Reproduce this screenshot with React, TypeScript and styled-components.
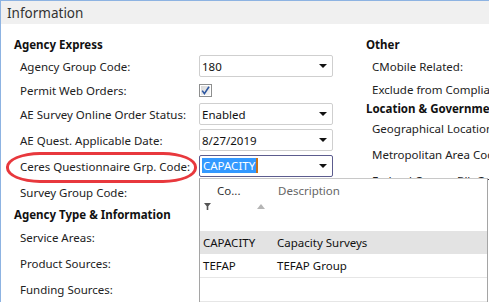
import React from "react";
import styled, { createGlobalStyle } from "styled-components";

const Global = createGlobalStyle`
  html, body { margin: 0; padding: 0; background: #fff; }
  body { font-family: "Noto Sans", "Open Sans", sans-serif; }
  * { box-sizing: border-box; }
`;

const Frame = styled.div`
  position: relative;
  width: 489px;
  height: 302px;
  overflow: hidden;
  background: #fff;
  border-left: 1px solid #8db3e2;
  border-top: 1px solid #8db3e2;
  font-size: 11.5px;
  color: #222;
`;

const Header = styled.div`
  height: 23px;
  background: #f0f0f0;
  display: flex;
  align-items: center;
  padding-left: 6px;
  font-size: 13.5px;
  color: #333;
`;

const Body = styled.div`
  display: flex;
  padding-top: 10px;
`;

const Column = styled.div<{ $left: number; $width: number }>`
  display: flex;
  flex-direction: column;
  margin-left: ${(p) => p.$left}px;
  width: ${(p) => p.$width}px;
  flex: none;
`;

const Heading = styled.div<{ $h?: number }>`
  height: ${(p) => p.$h ?? 20}px;
  margin-bottom: 1px;
  display: flex;
  align-items: center;
  font-weight: 700;
  color: #111;
  white-space: nowrap;
`;

const Row = styled.div<{ $h?: number; $mb?: number }>`
  display: flex;
  align-items: center;
  height: ${(p) => p.$h ?? 22}px;
  margin-bottom: ${(p) => p.$mb ?? 4}px;
  white-space: nowrap;
`;

const Label = styled.div`
  width: 185px;
  padding-left: 6px;
  flex: none;
  color: #222;
  overflow: hidden;
`;

const Select = styled.div<{ $focus?: boolean }>`
  width: 134px;
  height: 22px;
  flex: none;
  display: flex;
  align-items: center;
  justify-content: space-between;
  padding: 0 4px 0 2px;
  border: 1px solid ${(p) => (p.$focus ? "#5c5c8e" : "#cfcfcf")};
  border-radius: 2px;
  background: #fff;
  color: #111;
`;

const Arrow = styled.span`
  width: 0;
  height: 0;
  border-left: 4px solid transparent;
  border-right: 4px solid transparent;
  border-top: 4px solid #111;
  margin-right: 1px;
`;

const Selected = styled.span`
  background: #3399ff;
  color: #fff;
  padding: 0 1px;
  line-height: 16px;
  border-right: 2px solid #c8711a;
`;

const Lookup = styled.div`
  position: absolute;
  left: 198px;
  top: 177px;
  width: 289px;
  height: 140px;
  background: #fff;
  border: 1px solid #a5a5a5;
  border-top-color: #c8c8c8;
  padding: 0 0 0 3px;
`;

const LookupHead = styled.div`
  height: 52px;
  display: flex;
  flex-direction: column;
`;

const HeadLabels = styled.div`
  display: grid;
  grid-template-columns: 74px 1fr;
  height: 21px;
  align-items: center;
  padding-top: 1px;
`;

const HeadCell = styled.div<{ $pad: number; $muted?: boolean }>`
  padding-left: ${(p) => p.$pad}px;
  color: ${(p) => (p.$muted ? "#666" : "#333")};
`;

const IconBar = styled.div`
  display: flex;
  align-items: center;
  gap: 46px;
  height: 12px;
  padding-left: 1px;
`;

const LookupRow = styled.div<{ $sel?: boolean }>`
  display: grid;
  grid-template-columns: 74px 1fr;
  align-items: center;
  height: ${(p) => (p.$sel ? 23 : 24)}px;
  margin-left: -3px;
  padding-left: 3px;
  background: ${(p) => (p.$sel ? "#e3e3e3" : "#fff")};
  border-bottom: 1px solid ${(p) => (p.$sel ? "transparent" : "#e6e6e6")};
  color: #111;
`;

const Ring = styled.div`
  position: absolute;
  left: 5px;
  top: 151px;
  width: 191px;
  height: 31px;
  border: 3px solid #e8383d;
  border-radius: 34px / 15px;
  pointer-events: none;
`;

const CheckBox = () => (
  <svg width="13" height="13" viewBox="0 0 13 13" style={{ display: "block" }}>
    <defs>
      <linearGradient id="cbg" x1="0" y1="0" x2="1" y2="1">
        <stop offset="0" stopColor="#d8d8d8" />
        <stop offset="1" stopColor="#f6f6f6" />
      </linearGradient>
    </defs>
    <rect x="0.5" y="0.5" width="12" height="12" fill="#fff" stroke="#8e8f8f" />
    <rect x="2" y="2" width="9" height="9" fill="url(#cbg)" />
    <path d="M3.2 6.6 L5.4 9.6 L10 2.8" fill="none" stroke="#2c56a0" strokeWidth="1.6" />
  </svg>
);

const Funnel = () => (
  <svg width="7" height="7" viewBox="0 0 7 7" style={{ display: "block" }}>
    <path d="M0 0 H7 L4.3 3.2 V7 H2.7 V3.2 Z" fill="#555" />
  </svg>
);

const SortUp = () => (
  <svg width="8" height="5" viewBox="0 0 8 5" style={{ display: "block" }}>
    <path d="M0 5 L4 0 L8 5 Z" fill="#b5b5b5" />
  </svg>
);

const Dropdown = ({ children, focus }: { children: React.ReactNode; focus?: boolean }) => (
  <Select $focus={focus}>
    <span>{children}</span>
    <Arrow />
  </Select>
);

export default function App() {
  return (
    <>
      <Global />
      <Frame>
        <Header>Information</Header>
        <Body>
          <Column $left={13} $width={351}>
            <Heading>Agency Express</Heading>
            <Row>
              <Label>Agency Group Code:</Label>
              <Dropdown>180</Dropdown>
            </Row>
            <Row $h={18}>
              <Label>Permit Web Orders:</Label>
              <CheckBox />
            </Row>
            <Row>
              <Label>AE Survey Online Order Status:</Label>
              <Dropdown>Enabled</Dropdown>
            </Row>
            <Row>
              <Label>AE Quest. Applicable Date:</Label>
              <Dropdown>8/27/2019</Dropdown>
            </Row>
            <Row>
              <Label>Ceres Questionnaire Grp. Code:</Label>
              <Dropdown focus>
                <Selected>CAPACITY</Selected>
              </Dropdown>
            </Row>
            <Row $mb={0}>
              <Label>Survey Group Code:</Label>
            </Row>
            <Heading $h={22}>Agency Type &amp; Information</Heading>
            <Row>
              <Label>Service Areas:</Label>
            </Row>
            <Row>
              <Label>Product Sources:</Label>
            </Row>
            <Row>
              <Label>Funding Sources:</Label>
            </Row>
          </Column>
          <Column $left={1} $width={130}>
            <Heading>Other</Heading>
            <Row $h={23} $mb={0}>
              <Label>CMobile Related:</Label>
            </Row>
            <Row $h={22} $mb={0}>
              <Label>Exclude from Compliance:</Label>
            </Row>
            <Heading $h={16}>Location &amp; Government</Heading>
            <Row $h={22} $mb={4}>
              <Label>Geographical Location:</Label>
            </Row>
            <Row $h={22} $mb={4}>
              <Label>Metropolitan Area Code:</Label>
            </Row>
            <Row $h={22} $mb={4}>
              <Label>Federal Census Blk Grp:</Label>
            </Row>
          </Column>
        </Body>
        <Ring />
        <Lookup>
          <LookupHead>
            <HeadLabels>
              <HeadCell $pad={14}>Co...</HeadCell>
              <HeadCell $pad={1} $muted>Description</HeadCell>
            </HeadLabels>
            <IconBar>
              <Funnel />
              <SortUp />
            </IconBar>
          </LookupHead>
          <LookupRow $sel>
            <span>CAPACITY</span>
            <span>Capacity Surveys</span>
          </LookupRow>
          <LookupRow>
            <span>TEFAP</span>
            <span>TEFAP Group</span>
          </LookupRow>
          <LookupRow>
            <span />
            <span />
          </LookupRow>
        </Lookup>
      </Frame>
    </>
  );
}
